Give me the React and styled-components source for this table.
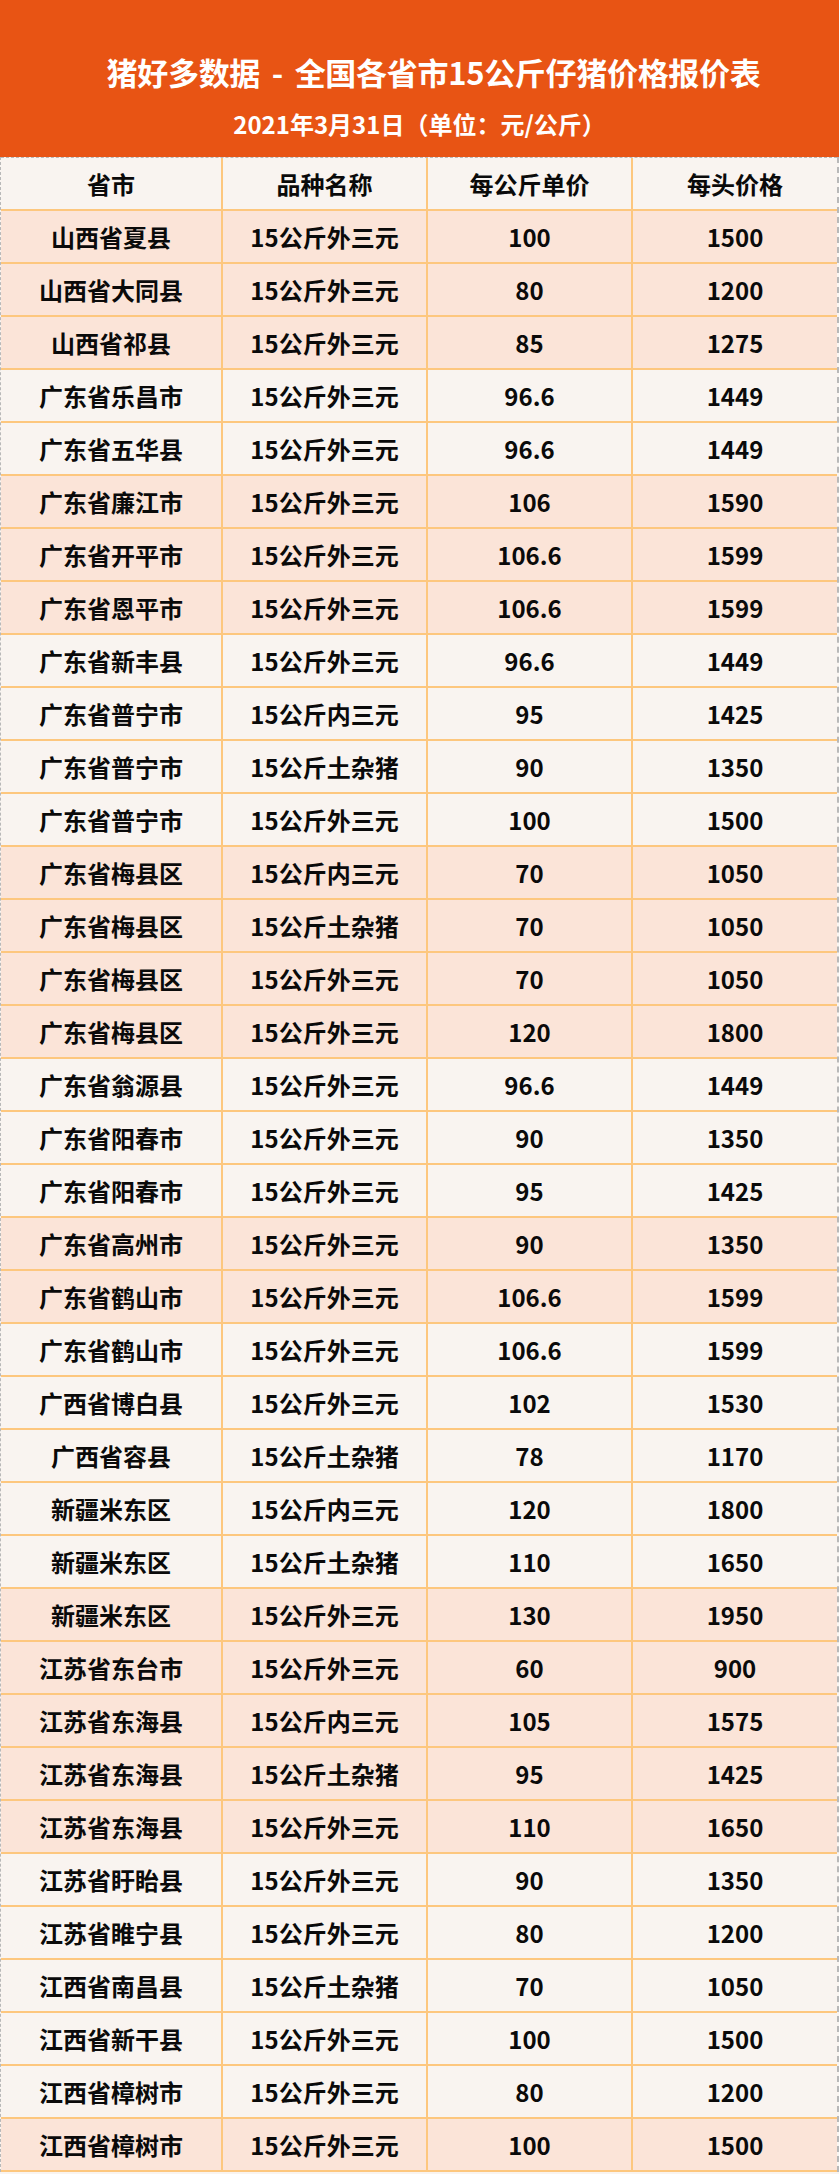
import React from 'react';
import styled, { createGlobalStyle } from 'styled-components';

const rows = [
   ['山西省夏县', '15公斤外三元', '100', '1500', true],
   ['山西省大同县', '15公斤外三元', '80', '1200', true],
   ['山西省祁县', '15公斤外三元', '85', '1275', true],
   ['广东省乐昌市', '15公斤外三元', '96.6', '1449', false],
   ['广东省五华县', '15公斤外三元', '96.6', '1449', false],
   ['广东省廉江市', '15公斤外三元', '106', '1590', true],
   ['广东省开平市', '15公斤外三元', '106.6', '1599', true],
   ['广东省恩平市', '15公斤外三元', '106.6', '1599', true],
   ['广东省新丰县', '15公斤外三元', '96.6', '1449', false],
   ['广东省普宁市', '15公斤内三元', '95', '1425', false],
   ['广东省普宁市', '15公斤土杂猪', '90', '1350', false],
   ['广东省普宁市', '15公斤外三元', '100', '1500', false],
   ['广东省梅县区', '15公斤内三元', '70', '1050', true],
   ['广东省梅县区', '15公斤土杂猪', '70', '1050', true],
   ['广东省梅县区', '15公斤外三元', '70', '1050', true],
   ['广东省梅县区', '15公斤外三元', '120', '1800', true],
   ['广东省翁源县', '15公斤外三元', '96.6', '1449', false],
   ['广东省阳春市', '15公斤外三元', '90', '1350', false],
   ['广东省阳春市', '15公斤外三元', '95', '1425', false],
   ['广东省高州市', '15公斤外三元', '90', '1350', true],
   ['广东省鹤山市', '15公斤外三元', '106.6', '1599', true],
   ['广东省鹤山市', '15公斤外三元', '106.6', '1599', false],
   ['广西省博白县', '15公斤外三元', '102', '1530', false],
   ['广西省容县', '15公斤土杂猪', '78', '1170', false],
   ['新疆米东区', '15公斤内三元', '120', '1800', false],
   ['新疆米东区', '15公斤土杂猪', '110', '1650', false],
   ['新疆米东区', '15公斤外三元', '130', '1950', true],
   ['江苏省东台市', '15公斤外三元', '60', '900', true],
   ['江苏省东海县', '15公斤内三元', '105', '1575', true],
   ['江苏省东海县', '15公斤土杂猪', '95', '1425', true],
   ['江苏省东海县', '15公斤外三元', '110', '1650', true],
   ['江苏省盱眙县', '15公斤外三元', '90', '1350', false],
   ['江苏省睢宁县', '15公斤外三元', '80', '1200', false],
   ['江西省南昌县', '15公斤土杂猪', '70', '1050', false],
   ['江西省新干县', '15公斤外三元', '100', '1500', false],
   ['江西省樟树市', '15公斤外三元', '80', '1200', false],
   ['江西省樟树市', '15公斤外三元', '100', '1500', true],
];

const App = () => {
  return (
    <Page>
      <GlobalStyle />
      <Banner>
         <Title>猪好多数据 - 全国各省市15公斤仔猪价格报价表</Title>
         <Subtitle>2021年3月31日（单位：元/公斤）</Subtitle>
      </Banner>
      <Table>
         <Row $head>
            <Cell>省市</Cell>
            <Cell>品种名称</Cell>
            <Cell>每公斤单价</Cell>
            <Cell>每头价格</Cell>
         </Row>
         {rows.map(([place, kind, unit, head, peach], i) => (
            <Row key={i} $peach={peach}>
               <Cell>{place}</Cell>
               <Cell>{kind}</Cell>
               <Cell>{unit}</Cell>
               <Cell>{head}</Cell>
            </Row>
         ))}
      </Table>
    </Page>
  );
}

export default App;

const GlobalStyle = createGlobalStyle`
   body{
      margin: 0;
      background-color: #ffffff;
      font-family: "Noto Sans CJK SC", "Noto Sans", sans-serif;
   }
`

const Page = styled.div`
   width: 839px;
   min-height: 2174px;
   background-color: #f9f4f0;
`

const Banner = styled.header`
   height: 157px;
   background-color: #e85414;
   color: #ffffff;
   display: flex;
   flex-direction: column;
   align-items: center;
   padding-top: 50px;
   box-sizing: border-box;
   font-weight: 700;
`

const Title = styled.h1`
   margin: 0 0 0 28px;
   font-size: 31px;
   line-height: 44px;
   font-weight: 700;
   letter-spacing: -0.3px;
   word-spacing: 5px;
`

const Subtitle = styled.div`
   margin-top: 14px;
   font-size: 24px;
   line-height: 32px;
`

const Table = styled.div`
   border-left: 1px dashed #b8b8b8;
   border-right: 2px dashed #b8b8b8;
`

const Row = styled.div`
   display: grid;
   grid-template-columns: 222px 205px 205px 204px;
   height: ${p => p.$head ? '54px' : '53px'};
   box-sizing: border-box;
   border-top: ${p => p.$head ? '1px dashed #b8b8b8' : 'none'};
   border-bottom: 2px solid #fdc77e;
   background-color: ${p => p.$peach ? '#fbe4d8' : '#f9f4f0'};
`

const Cell = styled.div`
   display: flex;
   align-items: center;
   justify-content: center;
   box-sizing: border-box;
   border-right: 2px solid #fdc77e;
   font-size: 24px;
   font-weight: 700;
   color: #0a0a0a;

   &:last-child{
      border-right: none;
   }
`
